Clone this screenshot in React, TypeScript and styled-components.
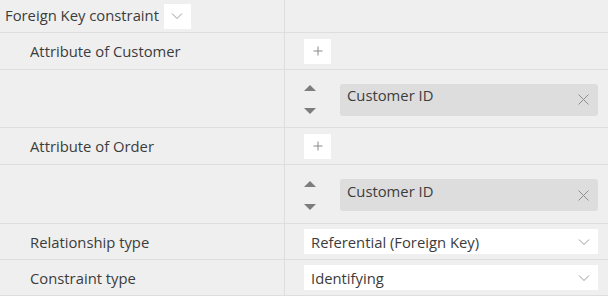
import React from 'react';
import styled, { createGlobalStyle } from 'styled-components';

const GlobalStyle = createGlobalStyle`
  body {
    margin: 0;
    background: #efefef;
    font-family: "Open Sans", "Noto Sans", sans-serif;
    font-size: 14.8px;
    color: #3c3c3c;
  }
`;

const Chevron = () => (
  <svg width="12" height="8" viewBox="0 0 12 8">
    <path d="M1 1.5 L6 6.5 L11 1.5" fill="none" stroke="#9a9a9a" strokeWidth="1" />
  </svg>
);

const Plus = () => (
  <svg width="10" height="10" viewBox="0 0 10 10">
    <path d="M5 0.5 V9.5 M0.5 5 H9.5" stroke="#8a8a8a" strokeWidth="1" />
  </svg>
);

const Cross = () => (
  <svg width="11" height="11" viewBox="0 0 11 11">
    <path d="M0.5 0.5 L10.5 10.5 M10.5 0.5 L0.5 10.5" stroke="#8f8f8f" strokeWidth="1" />
  </svg>
);

const App = () => {
  return (
    <>
      <GlobalStyle />
      <Table>
        <LabelCell $h={32}>
          <Title>Foreign Key constraint</Title>
          <SmallButton>
            <Chevron />
          </SmallButton>
        </LabelCell>
        <ValueCell $h={32} />

        <LabelCell $h={36} $indent>Attribute of Customer</LabelCell>
        <ValueCell $h={36}>
          <SmallButton>
            <Plus />
          </SmallButton>
        </ValueCell>

        <LabelCell $h={57} />
        <ValueCell $h={57}>
          <Chip name="Customer ID" />
        </ValueCell>

        <LabelCell $h={36} $indent>Attribute of Order</LabelCell>
        <ValueCell $h={36}>
          <SmallButton>
            <Plus />
          </SmallButton>
        </ValueCell>

        <LabelCell $h={58} />
        <ValueCell $h={58}>
          <Chip name="Customer ID" />
        </ValueCell>

        <LabelCell $h={35} $indent>Relationship type</LabelCell>
        <ValueCell $h={35}>
          <Select>
            <span>Referential (Foreign Key)</span>
            <Chevron />
          </Select>
        </ValueCell>

        <LabelCell $h={35} $indent>Constraint type</LabelCell>
        <ValueCell $h={35}>
          <Select>
            <span>Identifying</span>
            <Chevron />
          </Select>
        </ValueCell>
      </Table>
    </>
  );
};

const Chip = ({ name }: { name: string }) => (
  <ChipRow>
    <Arrows>
      <ArrowUp />
      <ArrowDown />
    </Arrows>
    <ChipBox>
      <ChipText>{name}</ChipText>
      <Cross />
    </ChipBox>
  </ChipRow>
);

const Table = styled.div`
  display: grid;
  grid-template-columns: 285px 1fr;
  width: 608px;
`;

const LabelCell = styled.div<{ $h: number; $indent?: boolean }>`
  height: ${(p) => p.$h}px;
  display: flex;
  align-items: center;
  gap: 5px;
  padding-left: ${(p) => (p.$indent ? 30 : 5)}px;
  border-bottom: 1px solid #dedede;
  border-right: 1px solid #dedede;
  white-space: nowrap;
`;

const ValueCell = styled.div<{ $h: number }>`
  height: ${(p) => p.$h}px;
  display: flex;
  align-items: center;
  padding: 0 10px 0 19px;
  border-bottom: 1px solid #dedede;
`;

const Title = styled.span`
  white-space: nowrap;
  padding-bottom: 2px;
`;

const SmallButton = styled.div`
  width: 27px;
  height: 25px;
  background: #fff;
  display: flex;
  align-items: center;
  justify-content: center;
`;

const ChipRow = styled.div`
  flex: 1;
  display: flex;
  align-items: center;
  gap: 24px;
  padding-top: 2px;
`;

const Arrows = styled.div`
  display: flex;
  flex-direction: column;
  justify-content: space-between;
  height: 29px;
  width: 12px;
`;

const ArrowUp = styled.div`
  width: 0;
  height: 0;
  border-left: 6px solid transparent;
  border-right: 6px solid transparent;
  border-bottom: 6px solid #7d7d7d;
`;

const ArrowDown = styled.div`
  width: 0;
  height: 0;
  border-left: 6px solid transparent;
  border-right: 6px solid transparent;
  border-top: 6px solid #7d7d7d;
`;

const ChipBox = styled.div`
  flex: 1;
  height: 32px;
  background: #dddddd;
  border-radius: 3px;
  display: flex;
  align-items: center;
  justify-content: space-between;
  padding: 0 9px 0 7px;
`;

const ChipText = styled.span`
  padding-bottom: 9px;
`;

const Select = styled.div`
  flex: 1;
  height: 25px;
  background: #fff;
  display: flex;
  align-items: center;
  justify-content: space-between;
  padding: 0 8px 0 7px;
`;

export default App;
